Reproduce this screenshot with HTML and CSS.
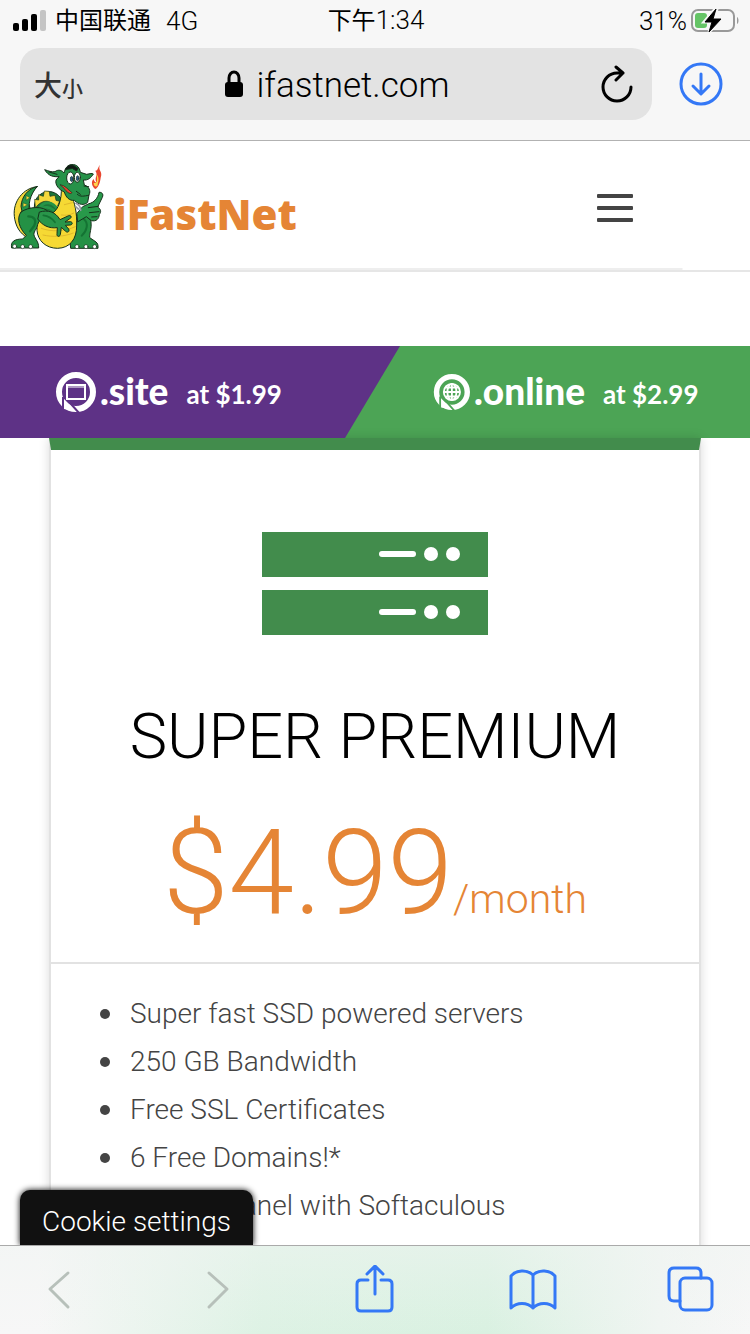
FILE: index.html
```html
<!DOCTYPE html>
<html lang="zh-CN">
<head>
    <meta charset="UTF-8">
    <meta name="viewport" content="width=device-width, initial-scale=1.0">
    <title>iFastNet</title>
    <link rel="stylesheet" href="styles.css">
</head>
<body>
    <div class="browser-top">
        <div class="status-bar">
            <div class="carrier">
                <svg width="34" height="22" viewBox="0 0 34 22">
                    <rect x="0" y="13" width="6" height="8" rx="2"/>
                    <rect x="9" y="9" width="6" height="12" rx="2"/>
                    <rect x="18" y="4" width="6" height="17" rx="2"/>
                    <rect x="27" y="0" width="6" height="21" rx="2" fill="#c4c4c4"/>
                </svg>
                <span class="han">中国联通</span>
                <span class="network">4G</span>
            </div>
            <div><span class="han">下午</span>1:34</div>
            <div class="battery">
                <span>31%</span>
                <svg width="48" height="24" viewBox="0 0 48 24">
                    <rect x="1" y="1" width="42" height="21" rx="6" fill="none" stroke="#999" stroke-width="2"/>
                    <path d="M46 8c2 1 2 6 0 7z" fill="#999"/>
                    <rect x="4" y="4" width="12" height="15" rx="3" fill="#65c466"/>
                    <path d="M24 0L13 13h8l-3 10 13-13h-8l3-10z" stroke="#f7f7f7" stroke-width="3"/>
                    <path d="M25 0L14 13h7l-3 10 12-13h-8z" stroke="#000" stroke-linejoin="round"/>
                </svg>
            </div>
        </div>
        <div class="address-row">
            <div class="address-bar">
                <button class="text-size" type="button">大<small>小</small></button>
                <div class="address">
                    <svg width="20" height="28" viewBox="0 0 20 28">
                        <rect x="1" y="12" width="18" height="15" rx="3"/>
                        <path d="M5 13V8a5 6 0 0 1 10 0v5" fill="none" stroke="#000" stroke-width="3"/>
                    </svg>
                    <input type="text" value="ifastnet.com" aria-label="Address">
                </div>
                <button type="button" aria-label="Reload">
                    <svg width="32" height="38" viewBox="0 0 32 38" fill="none" stroke="#000" stroke-width="3" stroke-linecap="round" stroke-linejoin="round">
                        <path d="M30 22a14 14 0 1 1-14-14h6M15 2l7 6-7 7"/>
                    </svg>
                </button>
            </div>
            <button type="button" aria-label="Downloads">
                <svg width="44" height="44" viewBox="0 0 44 44" fill="none" stroke="#3478f6" stroke-width="3" stroke-linecap="round" stroke-linejoin="round">
                    <circle cx="22" cy="22" r="20"/>
                    <path d="M22 12v19M14 24l8 8 8-8"/>
                </svg>
            </button>
        </div>
    </div>

    <main class="page">
        <header class="site-header">
            <a class="logo" href="#">
                <svg width="95" height="88" viewBox="30 20 285 264" stroke="#16301b" stroke-width="3" stroke-linejoin="round" stroke-linecap="round">
                    <!-- tail -->
                    <path d="M111 94C70 98 38 138 43 183c3 28 16 52 40 64l14-62-10-38c-6-18 6-34 24-53z" fill="#f5d83c"/>
                    <path d="M111 94C84 100 65 123 63 153l6 30 20-8c-5-28 0-55 22-81z" fill="#259447"/>
                    <path d="M79 121l10 6-10 7zM70 143l12 5-12 7z" fill="#f5d83c" stroke-width="1"/>
                    <!-- back and spikes -->
                    <path d="M106 178c-9-31 1-61 31-68 29-7 56 18 58 54l-15 29z" fill="#1d7639"/>
                    <path d="M105 145l-1-13 12 2 0-16 14 5 3-16 15 1 2 15 15-3 3 15 11 3-6 13 8 8-9 7c-10-28-39-40-62-13l-3 13z" fill="#f5d83c" stroke-width="2"/>
                    <path d="M119 158c12-22 41-21 53 5M112 169c18-20 41-17 61 7" fill="none" stroke="#259447" stroke-width="8"/>
                    <!-- right leg -->
                    <path d="M219 184c21-14 50-9 54 15 3 20-5 34-4 47 8 9 24 12 25 25v8h-82l-2-20z" fill="#249145"/>
                    <path d="M251 191c16 12 10 36-6 50" fill="none" stroke="#147333" stroke-width="6"/>
                    <!-- left leg -->
                    <path d="M63 170c23-17 69-19 82 0-8 25-37 43-43 63-3 14 15 22 14 45H35c-4-19 8-27 33-27l11-11C58 220 48 189 63 170z" fill="#249145"/>
                    <path d="M85 183c17 0 26 11 17 29l-12 16" fill="none" stroke="#147333" stroke-width="7"/>
                    <!-- belly and neck -->
                    <path d="M184 94l31 26c9 25 16 48 15 92 0 39-20 66-57 67-35 0-60-23-62-54-2-27 17-42 38-48 25-7 37-42 35-83z" fill="#f6d934"/>
                    <path d="M129 239c29 7 64 5 91-6M124 219c28 11 69 10 102-5M184 179c15 2 27 0 37-6M193 148l24-6" fill="none" stroke="#d5a926" stroke-width="2"/>
                    <!-- left arm -->
                    <path d="M119 170c25-8 48 0 61 23l26-12c9-2 10 7 2 10l-13 9 17-1c7 2 6 9-1 10l-15 1 10 11c4 8-4 13-10 6l-12-11-3 22c-3 9-12 5-10-3l1-18c-26 3-45-7-58-25z" fill="#29964a"/>
                    <path d="M130 180c15 2 26 8 35 21" fill="none" stroke="#147333" stroke-width="5"/>
                    <!-- right arm and pointing finger -->
                    <path d="M231 174l17-20 19-9c14-3 27-16 30-34 7-1 15 4 10 15l-14 29c9 6 12 14 5 22-1 14-9 22-24 19l-15-12-25 15z" fill="#28994a"/>
                    <path d="M265 157l30-4M268 172l29-3M275 185l16-1" stroke-width="3"/>
                    <!-- head -->
                    <path d="M176 64c-15 1-30-1-42-21 12 4 21 8 31 6 10-8 22-4 27 4 4-15 10-20 18-24 15-4 28 2 31 22l19 6c10-2 17-4 20-1-6 11-17 20-30 18l3 15c15 5 20 18 14 30l-4 22c-10 10-27 8-40-6-15 2-26-10-30-25-15-6-29-21-25-35z" fill="#269249"/>
                    <path d="M196 42c5-13 15-15 24-12l14 9-4 8-12-7z" fill="#101914"/>
                    <ellipse cx="211" cy="68" rx="11" ry="18" fill="#fff"/>
                    <ellipse cx="232" cy="66" rx="9" ry="15" fill="#fff"/>
                    <ellipse cx="215" cy="71" rx="4" ry="8" fill="#295a88" stroke-width="2"/>
                    <ellipse cx="233" cy="69" rx="4" ry="8" fill="#295a88" stroke-width="2"/>
                    <path d="M181 88c15 2 22 14 35 24-3 7-16-1-23-12z" fill="#e8442d" stroke-width="2"/>
                    <path d="M252 92l14 2M232 117c9 9 20 5 34 3M229 108l12 9M147 50l24 7" fill="none"/>
                    <path d="M228 144c10 5 14 13 14 21M227 154l8 7" fill="none" stroke="#9899a5" stroke-width="5"/>
                    <!-- flame -->
                    <path d="M300 29c-8 16 10 19 2 38-2 17-8 30-16 34-12-8-13-24-5-30 2 8 5 10 8 10-7-17 7-20-3-35 9 0 6-9 14-17z" fill="#e9462f" stroke="none"/>
                    <path d="M289 55c13 17 3 27 4 35-5 9-13 0-12-8 13 5 11-14 8-27z" fill="#ffd34b" stroke="none"/>
                    <!-- toes -->
                    <g fill="#fff" stroke-width="2">
                        <ellipse cx="44" cy="273" rx="6" ry="6"/>
                        <ellipse cx="68" cy="274" rx="6" ry="6"/>
                        <ellipse cx="92" cy="274" rx="6" ry="6"/>
                        <ellipse cx="231" cy="274" rx="6" ry="6"/>
                        <ellipse cx="258" cy="274" rx="6" ry="6"/>
                        <ellipse cx="284" cy="274" rx="6" ry="6"/>
                    </g>
                </svg>
                <span>iFastNet</span>
            </a>
            <button class="menu-button" type="button" aria-label="Menu">
                <span></span>
                <span></span>
                <span></span>
            </button>
        </header>

        <div class="domains">
            <a class="domain domain-site" href="#">
                <svg width="42" height="42" viewBox="0 0 42 42" fill="none" stroke="#fff">
                    <circle cx="22" cy="21" r="17" stroke-width="6"/>
                    <path d="M10 28v10l12 2z" fill="#fff" stroke="none"/>
                    <path d="M9 26v14M17 33l8 9" stroke="#5e3286" stroke-width="2"/>
                    <rect x="13" y="14" width="18" height="14" stroke-width="2"/>
                    <path d="M13 16h18"/>
                </svg>
                <strong>.site</strong>
                <span>at $1.99</span>
            </a>
            <a class="domain domain-online" href="#">
                <svg width="38" height="38" viewBox="0 0 42 42" fill="none" stroke="#fff">
                    <circle cx="22" cy="21" r="17" stroke-width="6"/>
                    <path d="M10 28v10l12 2z" fill="#fff" stroke="none"/>
                    <path d="M9 26v14M17 33l8 9" stroke="#4ca455" stroke-width="2"/>
                    <circle cx="22" cy="21" r="9" stroke-width="2"/>
                    <path d="M22 12v18M13 21h18M15 16h14M15 26h14" stroke-width="2"/>
                    <ellipse cx="22" cy="21" rx="5" ry="9" stroke-width="2"/>
                </svg>
                <strong>.online</strong>
                <span>at $2.99</span>
            </a>
        </div>

        <section class="plan">
            <div class="plan-head">
                <svg class="server" width="228" height="106" viewBox="0 0 228 106" fill="#428c4c">
                    <path d="M1 1h226v45H1zM1 59h226v45H1z"/>
                    <g fill="#fff">
                        <rect x="118" y="20" width="37" height="6" rx="3"/>
                        <circle cx="170" cy="23" r="7"/>
                        <circle cx="192" cy="23" r="7"/>
                        <rect x="118" y="78" width="37" height="6" rx="3"/>
                        <circle cx="170" cy="81" r="7"/>
                        <circle cx="192" cy="81" r="7"/>
                    </g>
                </svg>
                <h2>SUPER PREMIUM</h2>
                <p class="price">$4.99<span>/month</span></p>
            </div>
            <ul>
                <li>Super fast SSD powered servers</li>
                <li>250 GB Bandwidth</li>
                <li>Free SSL Certificates</li>
                <li>6 Free Domains!*</li>
                <li>Control panel with Softaculous</li>
            </ul>
        </section>
        <button class="cookie" type="button">Cookie settings</button>
    </main>

    <nav class="toolbar">
        <button type="button" aria-label="Back" disabled>
            <svg width="48" height="48" viewBox="0 0 48 48"><path d="M33 8L15 24l18 18"/></svg>
        </button>
        <button type="button" aria-label="Forward" disabled>
            <svg width="48" height="48" viewBox="0 0 48 48"><path d="M16 8l18 16-18 18"/></svg>
        </button>
        <button type="button" aria-label="Share">
            <svg width="48" height="48" viewBox="0 0 48 48"><path d="M17 15h-7q-4 0-4 4v23q0 4 4 4h27q4 0 4-4V19q0-4-4-4h-7M24 29V2M16 9l8-8 8 8"/></svg>
        </button>
        <button type="button" aria-label="Bookmarks">
            <svg width="48" height="48" viewBox="0 0 48 48"><path d="M24 10C18 4 7 5 2 11v32c6-6 16-6 22 0 6-6 16-6 22 0V11C41 5 30 4 24 10zv33"/></svg>
        </button>
        <button type="button" aria-label="Tabs">
            <svg width="48" height="48" viewBox="0 0 48 48"><rect x="13" y="13" width="32" height="32" rx="5"/><path d="M13 36H7q-5 0-5-5V8q0-5 5-5h22q5 0 5 5v5"/></svg>
        </button>
    </nav>
</body>
</html>
```

FILE: styles.css
```css
* {
    box-sizing: border-box;
}

body {
    display: flex;
    flex-direction: column;
    height: 100vh;
    margin: 0;
    overflow: hidden;
    background: #fff;
    color: #000;
    font-family: Roboto, "Noto Sans CJK SC", sans-serif;
    font-weight: 300;
}

button {
    padding: 0;
    border: none;
    background: none;
    color: inherit;
    font: inherit;
}

svg {
    display: block;
    flex-shrink: 0;
}

a {
    color: inherit;
    text-decoration: none;
}

/* browser bars */
.browser-top {
    flex-shrink: 0;
    height: 141px;
    border-bottom: 1px solid #b2b2b2;
    background: #f7f7f7;
}

.status-bar {
    display: grid;
    grid-template-columns: 1fr auto 1fr;
    align-items: center;
    height: 40px;
    padding: 1px 11px 0 13px;
    font-size: 26px;
    line-height: 38px;
}

.han {
    font-size: 24px;
    font-weight: 400;
}

.carrier {
    display: flex;
    align-items: center;
    gap: 8px;
}

.network {
    margin-left: 7px;
}

.battery {
    display: flex;
    align-items: center;
    justify-content: flex-end;
    gap: 4px;
}

.address-row {
    display: flex;
    align-items: center;
    gap: 27px;
    padding: 8px 27px 0 20px;
}

.address-bar {
    display: flex;
    flex: 1;
    align-items: center;
    justify-content: space-between;
    height: 72px;
    padding: 0 19px 0 14px;
    border-radius: 20px;
    background: #e3e3e3;
}

.text-size {
    color: #333;
    font-size: 28px;
    font-weight: 500;
}

.text-size small {
    font-size: 21px;
}

.address {
    display: flex;
    align-items: center;
    gap: 13px;
}

.address input {
    width: 204px;
    padding: 2px 0 0;
    border: none;
    background: none;
    font: inherit;
    font-size: 35px;
}

/* site header */
.page {
    position: relative;
    flex: 1;
    min-height: 0;
    overflow: hidden;
}

.site-header {
    display: flex;
    align-items: center;
    justify-content: space-between;
    height: 131px;
    padding: 0 117px 0 10px;
    border-bottom: 2px solid #e6e6e6;
    background: linear-gradient(#eee, #eee) left bottom / 91% 2px no-repeat;
}

.logo {
    display: flex;
    align-items: center;
    gap: 8px;
    color: #e58535;
    font-family: "Open Sans", sans-serif;
    font-size: 42px;
    font-weight: 800;
}

.logo span {
    padding-top: 16px;
}

.menu-button {
    display: flex;
    flex-direction: column;
    gap: 8px;
    padding-top: 4px;
}

.menu-button span {
    width: 36px;
    height: 4px;
    border-radius: 1px;
    background: #444;
}

/* domain offers */
.domains {
    display: grid;
    grid-template-columns: 8fr 7fr;
    height: 92px;
    margin-top: 74px;
    background: #4ca455;
}

.domain {
    display: flex;
    align-items: center;
    color: #fff;
    font-family: Lato, sans-serif;
    font-size: 26px;
    font-weight: 700;
}

.domain strong {
    margin: 0 18px 4px 4px;
    font-size: 37px;
    font-weight: 900;
}

.domain span {
    padding-top: 4px;
}

.domain-site {
    padding-left: 54px;
    background: #5e3286;
    clip-path: polygon(0 0, 100% 0, calc(100% - 55px) 100%, 0 100%);
}

.domain-online {
    padding-left: 32px;
}

/* plan card */
.plan {
    margin: 0 49px;
    border: 2px solid #e2e2e2;
    border-top: 12px solid #428c4c;
    box-shadow: 0 0 10px rgba(0, 0, 0, 0.15);
}

.plan-head {
    padding: 81px 0 24px;
    border-bottom: 2px solid #e2e2e2;
    text-align: center;
}

.server {
    margin: 0 auto;
}

.plan h2 {
    margin: 63px 0 0;
    font-size: 63px;
    font-weight: 300;
    line-height: 74px;
}

.price {
    margin: 34px 0 0;
    color: #e58535;
    font-size: 118px;
    line-height: 130px;
}

.price span {
    font-size: 41px;
    line-height: 42px;
}

.plan ul {
    margin: 0;
    padding: 26px 20px 48px 49px;
    color: #444;
    font-size: 28px;
    line-height: 48px;
    list-style: none;
}

.plan li {
    display: flex;
    align-items: center;
    gap: 20px;
}

.plan li::before {
    width: 10px;
    height: 10px;
    border-radius: 50%;
    background: #444;
    content: "";
}

.cookie {
    position: absolute;
    bottom: 0;
    left: 20px;
    height: 55px;
    padding: 8px 22px 0;
    border-radius: 10px 10px 0 0;
    background: #111;
    box-shadow: 0 0 6px #000;
    color: #fff;
    font-size: 28px;
}

.toolbar {
    display: flex;
    flex-shrink: 0;
    align-items: flex-start;
    justify-content: space-between;
    height: 89px;
    padding: 19px 35px 0;
    border-top: 1px solid #aaa;
    background: linear-gradient(rgba(240, 244, 242, 0.5), transparent), linear-gradient(90deg, #f7f7f7 5%, #ddf2e4 35%, #d9f1e1 65%, #f0f5f2 88%, #f7f7f7);
}

.toolbar svg {
    fill: none;
    stroke: #3478f6;
    stroke-width: 3;
    stroke-linecap: round;
    stroke-linejoin: round;
}

.toolbar button:disabled svg {
    stroke: #b7c0ba;
}
```
